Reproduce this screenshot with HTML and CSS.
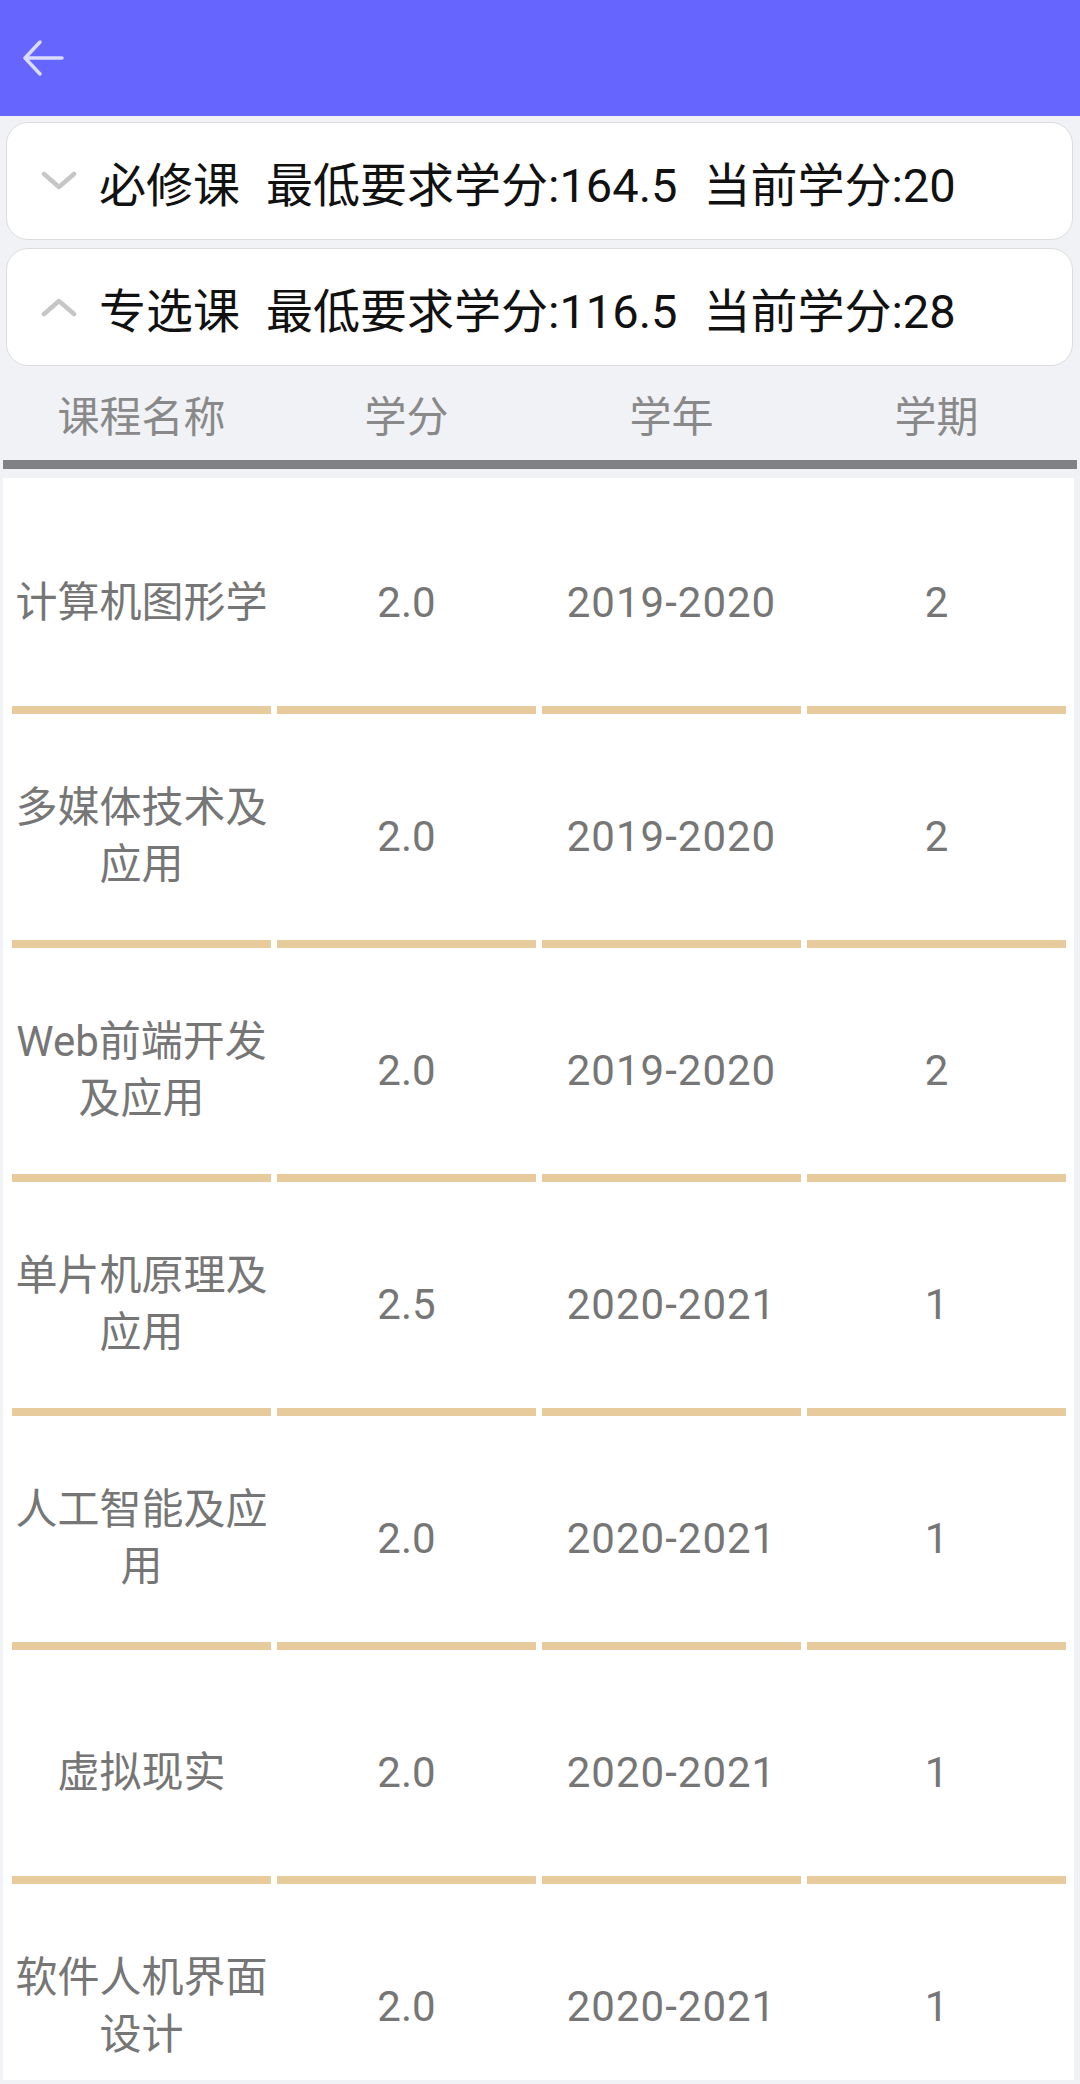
FILE: index.html
```html
<!DOCTYPE html>
<html lang="zh-CN">
<head>
    <meta charset="UTF-8">
    <meta name="viewport" content="width=device-width, initial-scale=1.0">
    <title>学分查询</title>
    <link rel="stylesheet" href="styles.css">
</head>
<body>
    <div class="page">
        <div class="topbar">
            <svg class="back" width="42" height="38" viewBox="0 0 42 38">
                <path d="M40 19 H3 M18 3 L3 19 L18 35" fill="none" stroke="#dadcff" stroke-width="3.5" stroke-linecap="round" stroke-linejoin="round"/>
            </svg>
        </div>

        <div class="groups">
            <div class="group">
                <svg class="chevron" width="36" height="20" viewBox="0 0 36 20">
                    <path d="M3 3 L18 16 L33 3" fill="none" stroke="#c6c6c6" stroke-width="4.5" stroke-linecap="round" stroke-linejoin="round"/>
                </svg>
                <span class="group-name">必修课</span>
                <span class="group-item">最低要求学分:164.5</span>
                <span class="group-item">当前学分:20</span>
            </div>
            <div class="group">
                <svg class="chevron" width="36" height="20" viewBox="0 0 36 20">
                    <path d="M3 17 L18 4 L33 17" fill="none" stroke="#c6c6c6" stroke-width="4.5" stroke-linecap="round" stroke-linejoin="round"/>
                </svg>
                <span class="group-name">专选课</span>
                <span class="group-item">最低要求学分:116.5</span>
                <span class="group-item">当前学分:28</span>
            </div>
        </div>

        <div class="table-head">
            <div>课程名称</div>
            <div>学分</div>
            <div>学年</div>
            <div>学期</div>
        </div>
        <div class="head-bar"></div>

        <div class="table-body">
            <div class="row">
                <div class="cell">计算机图形学</div>
                <div class="cell">2.0</div>
                <div class="cell">2019-2020</div>
                <div class="cell">2</div>
            </div>
            <div class="row">
                <div class="cell">多媒体技术及应用</div>
                <div class="cell">2.0</div>
                <div class="cell">2019-2020</div>
                <div class="cell">2</div>
            </div>
            <div class="row">
                <div class="cell">Web前端开发及应用</div>
                <div class="cell">2.0</div>
                <div class="cell">2019-2020</div>
                <div class="cell">2</div>
            </div>
            <div class="row">
                <div class="cell">单片机原理及应用</div>
                <div class="cell">2.5</div>
                <div class="cell">2020-2021</div>
                <div class="cell">1</div>
            </div>
            <div class="row">
                <div class="cell">人工智能及应用</div>
                <div class="cell">2.0</div>
                <div class="cell">2020-2021</div>
                <div class="cell">1</div>
            </div>
            <div class="row">
                <div class="cell">虚拟现实</div>
                <div class="cell">2.0</div>
                <div class="cell">2020-2021</div>
                <div class="cell">1</div>
            </div>
            <div class="row">
                <div class="cell">软件人机界面设计</div>
                <div class="cell">2.0</div>
                <div class="cell">2020-2021</div>
                <div class="cell">1</div>
            </div>
        </div>
    </div>
</body>
</html>
```

FILE: styles.css
```css
body {
    margin: 0;
    background: #f0f2f5;
    font-family: Roboto, "Noto Sans CJK SC", sans-serif;
}
.page {
    height: 2084px;
    display: flex;
    flex-direction: column;
    overflow: hidden;
}
.topbar {
    height: 116px;
    flex-shrink: 0;
    background: #6666ff;
    display: flex;
    align-items: center;
    padding-left: 22px;
}
.back {
    display: block;
}
.groups {
    display: flex;
    flex-direction: column;
    gap: 8px;
    padding: 6px 7px 0 6px;
}
.group {
    height: 116px;
    background: #fff;
    border: 1px solid #dcdcdc;
    border-radius: 22px;
    display: flex;
    align-items: center;
    padding-left: 34px;
    font-size: 47px;
    color: #111;
}
.chevron {
    display: block;
    margin-right: 22px;
}
.group-item {
    margin-left: 26px;
}
.table-head {
    height: 94px;
    display: grid;
    grid-template-columns: repeat(4, 259px);
    column-gap: 6px;
    padding-left: 12px;
    align-items: center;
    text-align: center;
    font-size: 42px;
    color: #898989;
}
.head-bar {
    height: 9px;
    margin: 0 3px;
    background: #808184;
    flex-shrink: 0;
}
.table-body {
    flex: 1;
    overflow: hidden;
    margin: 9px 6px 4px 3px;
    padding: 2px 8px 0 9px;
    background: #fff;
}
.row {
    display: grid;
    grid-template-columns: repeat(4, 259px);
    column-gap: 6px;
}
.cell {
    height: 208px;
    padding-top: 18px;
    border-bottom: 8px solid #e8cb9d;
    display: flex;
    align-items: center;
    justify-content: center;
    text-align: center;
    font-size: 42px;
    line-height: 57px;
    color: #767676;
}
.cell:nth-child(3) {
    letter-spacing: 1px;
}
```
